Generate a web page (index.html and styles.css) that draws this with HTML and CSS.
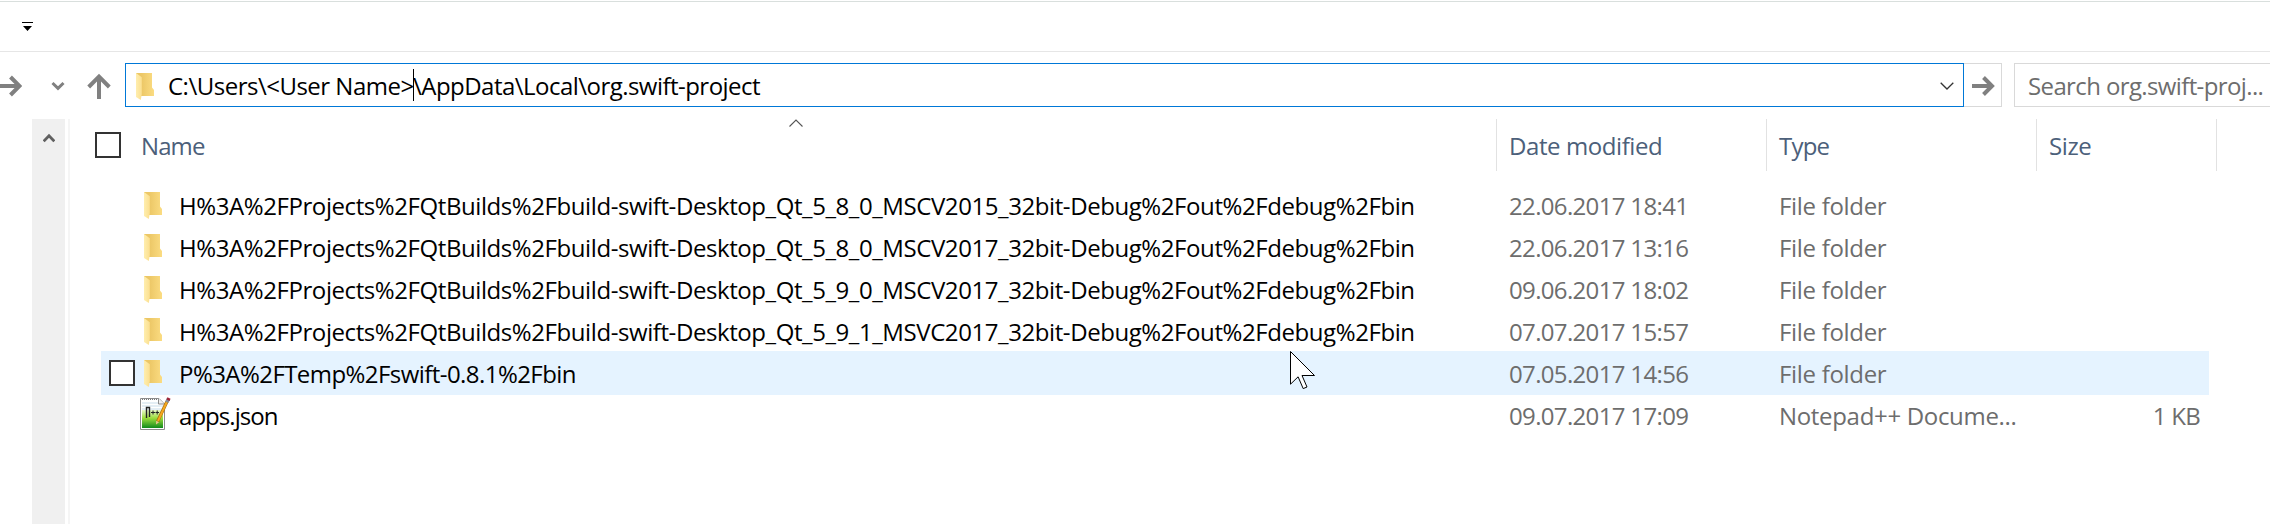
FILE: index.html
```
<!DOCTYPE html>
<html lang="en">
<head>
<meta charset="utf-8">
<title>org.swift-project</title>
<link rel="stylesheet" href="styles.css">
</head>
<body>
<svg class="defs" width="0" height="0" aria-hidden="true">
  <defs>
    <linearGradient id="back" x1="0" x2="1"><stop offset="0.3" stop-color="#ecc766"/><stop offset="1" stop-color="#fbdc82"/></linearGradient>
    <linearGradient id="flap" x1="0" x2="1"><stop offset="0" stop-color="#ffeeae"/><stop offset="1" stop-color="#fbdf90"/></linearGradient>
    <linearGradient id="green" x1="0" y1="0" x2="0" y2="1"><stop offset="0" stop-color="#e9f8c8"/><stop offset="0.45" stop-color="#9bdc3c"/><stop offset="1" stop-color="#118a1c"/></linearGradient>
    <symbol id="folder" viewBox="0 0 19 27">
      <path d="M0 0H16V14.5L18 17V23H0Z" fill="url(#back)"/>
      <path d="M0 0L5.8 4.2V21L4.8 27L0 24Z" fill="url(#flap)"/>
    </symbol>
  </defs>
</svg>

<div class="titlebar">
  <svg class="qat" width="12" height="10" viewBox="0 0 12 10"><path d="M0 0H11V1H0ZM1 4H10L5.5 9Z" fill="#000"/></svg>
</div>

<div class="navbar">
  <div class="nav-buttons">
    <svg width="22" height="44" viewBox="0 0 22 44"><path d="M0 23H19M10.5 14L19.5 23L10.5 32" fill="none" stroke="#808080" stroke-width="4"/></svg>
    <svg class="recent" width="14" height="44" viewBox="0 0 14 44"><path d="M1.5 20L7 25.3L12.5 20" fill="none" stroke="#808080" stroke-width="3"/></svg>
    <svg class="up" width="24" height="44" viewBox="0 0 24 44"><path d="M12 36V14M1.7 24L12 13.7L22.3 24" fill="none" stroke="#808080" stroke-width="4"/></svg>
  </div>
  <div class="address">
    <svg class="address-icon" width="19" height="27"><use href="#folder"/></svg>
    <span class="path path-head">C:\Users\&lt;User Name&gt;</span>
    <span class="caret"></span>
    <span class="path path-tail">\AppData\Local\org.swift-project</span>
    <svg class="dropdown" width="14" height="9" viewBox="0 0 14 9"><path d="M0.7 0.8L7 7L13.3 0.8" fill="none" stroke="#333" stroke-width="1.3"/></svg>
  </div>
  <div class="go">
    <svg width="24" height="20" viewBox="0 0 24 20"><path d="M0 10H20M11.5 1.5L20 10L11.5 18.5" fill="none" stroke="#808080" stroke-width="4"/></svg>
  </div>
  <div class="search">Search org.swift-proj...</div>
</div>

<div class="content">
  <div class="scrollbar">
    <svg width="12" height="10" viewBox="0 0 12 10"><path d="M0.7 8.3L6 2.8L11.3 8.3" fill="none" stroke="#606060" stroke-width="2.8"/></svg>
  </div>
  <div class="divider"></div>
  <div class="list">
    <div class="header">
      <div class="col-name head">
        <span class="checkbox"></span><span class="title tight">Name</span>
        <svg class="sort" width="14" height="8" viewBox="0 0 14 8"><path d="M0.5 7.5L7 1L13.5 7.5" fill="none" stroke="#555" stroke-width="1.1"/></svg>
      </div>
      <div class="col-date head"><span class="title">Date modified</span></div>
      <div class="col-type head"><span class="title type-title">Type</span></div>
      <div class="col-size head"><span class="title">Size</span></div>
    </div>

    <div class="rows">
      <div class="row">
        <div class="name"><span class="mark"></span><svg class="folder" width="19" height="27"><use href="#folder"/></svg><span class="label long">H%3A%2FProjects%2FQtBuilds%2Fbuild-swift-Desktop_Qt_5_8_0_MSCV2015_32bit-Debug%2Fout%2Fdebug%2Fbin</span></div>
        <div class="date">22.06.2017 18:41</div><div class="type">File folder</div><div class="size"></div>
      </div>
      <div class="row">
        <div class="name"><span class="mark"></span><svg class="folder" width="19" height="27"><use href="#folder"/></svg><span class="label long">H%3A%2FProjects%2FQtBuilds%2Fbuild-swift-Desktop_Qt_5_8_0_MSCV2017_32bit-Debug%2Fout%2Fdebug%2Fbin</span></div>
        <div class="date">22.06.2017 13:16</div><div class="type">File folder</div><div class="size"></div>
      </div>
      <div class="row">
        <div class="name"><span class="mark"></span><svg class="folder" width="19" height="27"><use href="#folder"/></svg><span class="label long">H%3A%2FProjects%2FQtBuilds%2Fbuild-swift-Desktop_Qt_5_9_0_MSCV2017_32bit-Debug%2Fout%2Fdebug%2Fbin</span></div>
        <div class="date">09.06.2017 18:02</div><div class="type">File folder</div><div class="size"></div>
      </div>
      <div class="row">
        <div class="name"><span class="mark"></span><svg class="folder" width="19" height="27"><use href="#folder"/></svg><span class="label long">H%3A%2FProjects%2FQtBuilds%2Fbuild-swift-Desktop_Qt_5_9_1_MSVC2017_32bit-Debug%2Fout%2Fdebug%2Fbin</span></div>
        <div class="date">07.07.2017 15:57</div><div class="type">File folder</div><div class="size"></div>
      </div>
      <div class="row hover">
        <div class="name"><span class="mark checkbox"></span><svg class="folder" width="19" height="27"><use href="#folder"/></svg><span class="label medium">P%3A%2FTemp%2Fswift-0.8.1%2Fbin</span></div>
        <div class="date">07.05.2017 14:56</div><div class="type">File folder</div><div class="size"></div>
        <svg class="pointer" width="26" height="40" viewBox="0 0 26 40"><path d="M0.5 0.5V33.2L8.1 25.8L13.2 37.6L17 36L12 24.5H24.5Z" fill="#fff" stroke="#000"/></svg>
      </div>
      <div class="row">
        <div class="name"><span class="mark"></span>
          <svg class="notepad" width="30" height="32" viewBox="0 0 30 32">
            <path d="M0.5 0.5H19L24.5 6V31.5H0.5Z" fill="#fff" stroke="#8c8c8c"/>
            <path d="M2 1.5H18" stroke="#777" stroke-dasharray="1 1"/>
            <path d="M2 5H18M2 8H23M2 11H23" stroke="#c9ddea"/>
            <rect x="2" y="12" width="21" height="18" fill="url(#green)"/>
            <path d="M18.5 0.5V6H24.5" fill="#eee" stroke="#8c8c8c"/>
            <path d="M6.5 20V9.5H9.5V19" fill="none" stroke="#222" stroke-width="1.4"/>
            <path d="M11 14.5H15M13 12.5V16.5M15.5 14.5H19M17.2 12.5V16.5" stroke="#222"/>
            <path d="M27 3.5L17.6 23.5" stroke="#a86a10" stroke-width="3.2"/>
            <path d="M26.8 4L18 23" stroke="#f5a81c" stroke-width="2"/>
            <path d="M19 24.2L16.2 22.8L16 26.5Z" fill="#e8c58e"/>
            <path d="M28.6 0.6L26.8 4.2" stroke="#8a9096" stroke-width="3.6"/>
            <path d="M29 0L28 2.2" stroke="#a02438" stroke-width="3.4"/>
          </svg>
          <span class="label short">apps.json</span></div>
        <div class="date">09.07.2017 17:09</div><div class="type wide">Notepad++ Docume...</div><div class="size">1 KB</div>
      </div>
    </div>
  </div>
</div>
</body>
</html>
```
FILE: styles.css
```
* { box-sizing: border-box; }

body {
  margin: 0;
  height: 524px;
  overflow: hidden;
  background: #fff;
  color: #000;
  font: 24px/42px "Open Sans", "Noto Sans", sans-serif;
  white-space: nowrap;
  display: flex;
  flex-direction: column;
}

svg { display: block; flex: none; }
.defs { position: absolute; }

/* title bar */
.titlebar {
  flex: none;
  height: 51px;
  margin-top: 1px;
  border-top: 1px solid #d9dfdd;
  border-bottom: 1px solid #e6e6e6;
  padding: 20px 0 0 22px;
}

/* navigation */
.navbar {
  flex: none;
  display: flex;
  height: 67px;
  padding-top: 11px;
}
.nav-buttons { display: flex; width: 125px; flex: none; }
.recent { margin-left: 29px; }
.up { margin-left: 22px; }

.address {
  flex: none;
  display: flex;
  width: 1839px;
  height: 44px;
  padding-left: 10px;
  border: 1px solid #0078d7;
}
.address-icon { margin: 9px 13px 0 0; }
.path { padding-top: 1px; }
.path-head { width: 245px; letter-spacing: -0.5px; }
.caret { width: 1px; height: 32px; margin: 5px -1px 0 0; background: #000; }
.path-tail { letter-spacing: -0.53px; flex: 1; }
.dropdown { margin: 18px 9px 0 0; }

.go {
  flex: none;
  width: 38px;
  height: 44px;
  border: 1px solid #d9d9d9;
  border-left: 0;
  padding: 12px 0 0 8px;
}
.search {
  flex: 1;
  height: 44px;
  margin-left: 12px;
  padding: 1px 0 0 13px;
  border: 1px solid #d9d9d9;
  border-right: 0;
  color: #6d6d6d;
  letter-spacing: -0.62px;
}

/* body of the window */
.content { flex: 1; display: flex; padding-left: 32px; }
.scrollbar {
  width: 33px;
  flex: none;
  padding: 14px 0 0 11px;
  background: #f0f0f0;
}
.divider { width: 2px; margin-left: 3px; flex: none; background: #f5f5f5; }
.list { flex: 1; }

.header { display: flex; height: 52px; }
.head {
  position: relative;
  flex: none;
  display: flex;
  border-right: 1px solid #e2e2e2;
}
.title {
  margin-top: 6px;
  color: #4c607a;
  letter-spacing: -0.42px;
}
.col-name { width: 1427px; padding-left: 25px; }
.col-name .checkbox { margin-top: 13px; }
.col-date { width: 270px; padding-left: 12px; }
.col-type { width: 270px; padding-left: 12px; }
.col-size { width: 180px; padding-left: 12px; }
.tight { margin-left: 20px; letter-spacing: -0.9px; }
.type-title { letter-spacing: -0.8px; }
.sort { position: absolute; left: 719px; top: 0; }

.checkbox {
  flex: none;
  width: 26px;
  height: 26px;
  border: 2px solid #333;
  background: #fff;
}

/* file rows */
.rows { padding: 12px 0 0 31px; }
.row {
  position: relative;
  display: flex;
  width: 2108px;
  height: 44px;
  margin-bottom: -2px;
  padding-top: 2px;
  color: #6d6d6d;
}
.hover { background: #e5f3ff; }
.name {
  flex: none;
  display: flex;
  width: 1408px;
  padding-left: 8px;
  color: #000;
}
.mark { flex: none; width: 26px; margin-top: 7px; }
.folder { margin: 7px 16px 0 9px; }
.notepad { margin: 3px 9px 0 5px; overflow: visible; }
.long { letter-spacing: -0.418px; }
.medium { letter-spacing: -0.56px; }
.short { letter-spacing: -0.95px; }
.date { flex: none; width: 270px; letter-spacing: -0.66px; }
.type { flex: none; width: 270px; letter-spacing: -0.31px; }
.wide { letter-spacing: -0.32px; }
.size { flex: 1; padding-right: 9px; text-align: right; letter-spacing: -0.7px; }

.pointer { position: absolute; left: 1189px; top: 0; }
```
